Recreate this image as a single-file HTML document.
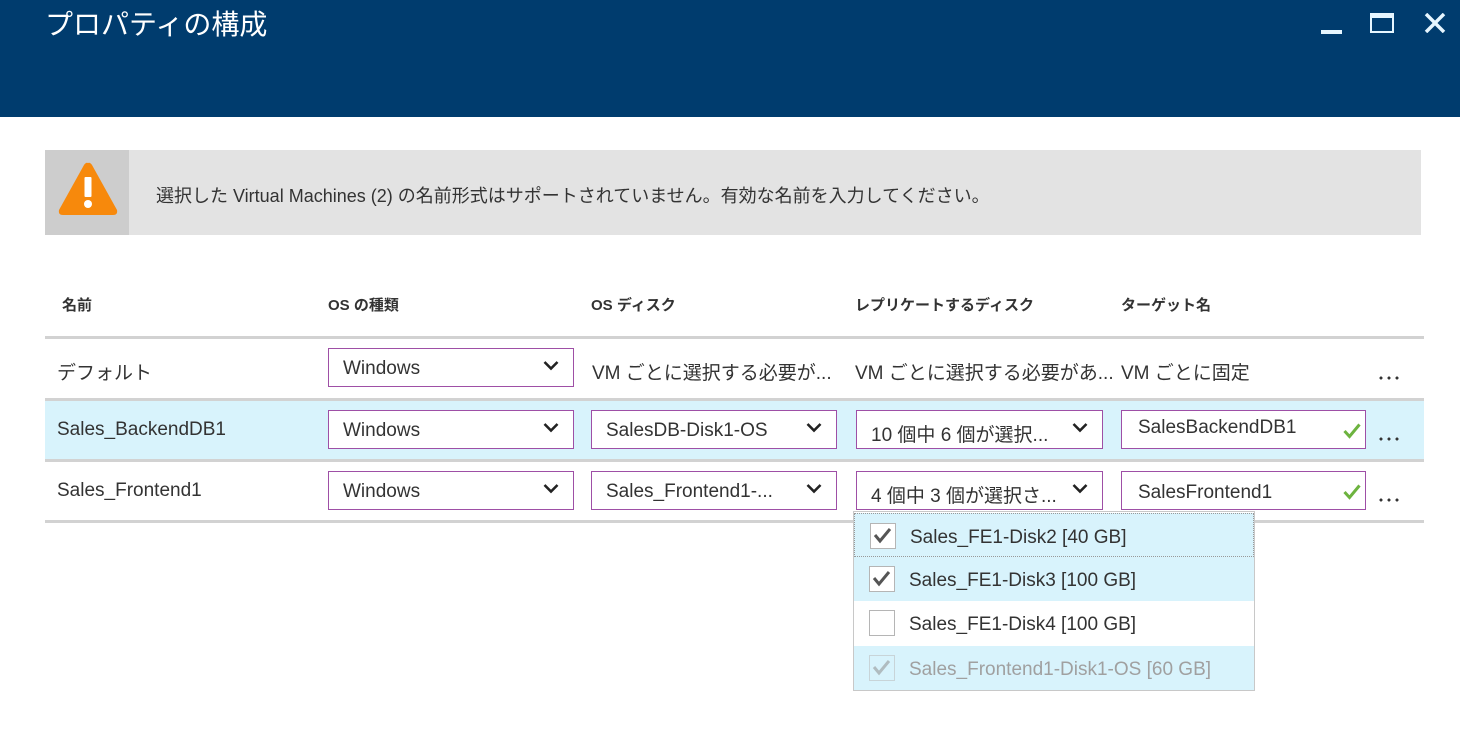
<!DOCTYPE html>
<html><head><meta charset="utf-8"><style>
*{margin:0;padding:0;box-sizing:border-box}
body{width:1460px;height:745px;background:#fff;position:relative;overflow:hidden;font-family:"Liberation Sans","Noto Sans CJK JP",sans-serif;color:#333}
.a{position:absolute;white-space:nowrap}
.hdr{left:0;top:0;width:1460px;height:117px;background:#003c6e}
.title{left:45px;top:3px;font-size:28px;color:#fff}
.warn{left:45px;top:150px;width:1376px;height:85px;background:#e3e3e3}
.wi{left:45px;top:150px;width:84px;height:85px;background:#cdcdcd}
.wt{left:156px;top:182px;font-size:18px;color:#333}
.th{top:294px;font-size:15px;font-weight:bold;color:#333}
.line{left:45px;width:1379px;height:3px;background:#d2d2d2}
.cell{font-size:19px;color:#333}
.sel{height:39px;border:1.5px solid #9e4fa6;background:#fff;font-size:19px;padding:9px 0 0 14px;overflow:hidden}
.chev{position:absolute;right:14px;top:10px}
.dots{width:24px;height:4px;background:radial-gradient(circle,#333 1.4px,transparent 1.6px) 0 0/8px 4px repeat-x}
.dd{left:853px;top:511px;width:402px;height:180px;border:1px solid #c8c8c8;background:#fff}
.opt{position:absolute;left:0;width:400px;height:44px;font-size:19px;padding:13px 0 0 55px}
.box{position:absolute;left:15px;top:9px;width:26px;height:26px;border:1.5px solid #b5b5b5;background:#fff}
</style></head><body>
<div class="a hdr"></div>
<div class="a title">プロパティの構成</div>
<div class="a" style="left:1321px;top:30px;width:21px;height:4px;background:#e6f6ff"></div>
<div class="a" style="left:1370px;top:13px;width:24px;height:20px;border:2px solid #e6f6ff;border-top-width:5px"></div>
<svg class="a" style="left:1424px;top:13px" width="22" height="20" viewBox="0 0 22 20"><path d="M2 1L20 19M20 1L2 19" stroke="#e6f6ff" stroke-width="3.5"/></svg>

<div class="a warn"></div>
<div class="a wi"></div>
<svg class="a" style="left:56px;top:160px" width="64" height="58" viewBox="0 0 64 58"><path d="M32 3 Q34 2 36 5 L61 50 Q62 55 57 55 L7 55 Q2 55 3 50 L28 5 Q30 2 32 3Z" fill="#f7890c"/><rect x="28.5" y="17" width="7" height="20" rx="1" fill="#fff"/><circle cx="32" cy="44" r="4" fill="#fff"/></svg>
<div class="a wt">選択した Virtual Machines (2) の名前形式はサポートされていません。有効な名前を入力してください。</div>

<div class="a th" style="left:62px">名前</div>
<div class="a th" style="left:328px">OS の種類</div>
<div class="a th" style="left:591px">OS ディスク</div>
<div class="a th" style="left:855px">レプリケートするディスク</div>
<div class="a th" style="left:1121px">ターゲット名</div>

<div class="a line" style="top:336px"></div>
<div class="a" style="left:45px;top:400px;width:1379px;height:59px;background:#d8f3fc"></div>
<div class="a line" style="top:398px"></div>
<div class="a line" style="top:459px"></div>
<div class="a line" style="top:520px"></div>

<!-- row1 -->
<div class="a cell" style="left:57px;top:358px">デフォルト</div>
<div class="a sel" style="left:328px;top:348px;width:246px">Windows<svg class="chev" width="16" height="12" viewBox="0 0 16 12"><path d="M1.5 3L8 9.5L14.5 3" fill="none" stroke="#222" stroke-width="2.6"/></svg></div>
<div class="a cell" style="left:592px;top:358px">VM ごとに選択する必要が...</div>
<div class="a cell" style="left:855px;top:358px">VM ごとに選択する必要があ...</div>
<div class="a cell" style="left:1121px;top:358px">VM ごとに固定</div>
<div class="a dots" style="left:1377px;top:376px"></div>

<!-- row2 -->
<div class="a cell" style="left:57px;top:419px">Sales_BackendDB1</div>
<div class="a sel" style="left:328px;top:410px;width:246px">Windows<svg class="chev" width="16" height="12" viewBox="0 0 16 12"><path d="M1.5 3L8 9.5L14.5 3" fill="none" stroke="#222" stroke-width="2.6"/></svg></div>
<div class="a sel" style="left:591px;top:410px;width:246px">SalesDB-Disk1-OS<svg class="chev" width="16" height="12" viewBox="0 0 16 12"><path d="M1.5 3L8 9.5L14.5 3" fill="none" stroke="#222" stroke-width="2.6"/></svg></div>
<div class="a sel" style="left:856px;top:410px;width:247px">10 個中 6 個が選択...<svg class="chev" width="16" height="12" viewBox="0 0 16 12"><path d="M1.5 3L8 9.5L14.5 3" fill="none" stroke="#222" stroke-width="2.6"/></svg></div>
<div class="a sel" style="left:1121px;top:410px;width:245px;padding-top:6px;padding-left:16px">SalesBackendDB1<svg class="chev" style="right:4px;top:12px" width="18" height="16" viewBox="0 0 18 16"><path d="M1.5 8L6.5 13.5L16.5 1.5" fill="none" stroke="#6db33f" stroke-width="3"/></svg></div>
<div class="a dots" style="left:1377px;top:437px"></div>

<!-- row3 -->
<div class="a cell" style="left:57px;top:480px">Sales_Frontend1</div>
<div class="a sel" style="left:328px;top:471px;width:246px">Windows<svg class="chev" width="16" height="12" viewBox="0 0 16 12"><path d="M1.5 3L8 9.5L14.5 3" fill="none" stroke="#222" stroke-width="2.6"/></svg></div>
<div class="a sel" style="left:591px;top:471px;width:246px">Sales_Frontend1-...<svg class="chev" width="16" height="12" viewBox="0 0 16 12"><path d="M1.5 3L8 9.5L14.5 3" fill="none" stroke="#222" stroke-width="2.6"/></svg></div>
<div class="a sel" style="left:856px;top:471px;width:247px">4 個中 3 個が選択さ...<svg class="chev" width="16" height="12" viewBox="0 0 16 12"><path d="M1.5 3L8 9.5L14.5 3" fill="none" stroke="#222" stroke-width="2.6"/></svg></div>
<div class="a sel" style="left:1121px;top:471px;width:245px;padding-top:10px;padding-left:16px">SalesFrontend1<svg class="chev" style="right:4px;top:12px" width="18" height="16" viewBox="0 0 18 16"><path d="M1.5 8L6.5 13.5L16.5 1.5" fill="none" stroke="#6db33f" stroke-width="3"/></svg></div>
<div class="a dots" style="left:1377px;top:498px"></div>

<!-- dropdown -->
<div class="a dd">
 <div class="opt" style="top:1px;background:#d8f3fc;border:1px dotted #999">
  <div class="box"><svg width="23" height="23" viewBox="0 0 23 23"><path d="M4 11L9 17L19 5" fill="none" stroke="#555" stroke-width="3"/></svg></div>Sales_FE1-Disk2 [40 GB]</div>
 <div class="opt" style="top:45px;background:#d8f3fc">
  <div class="box"><svg width="23" height="23" viewBox="0 0 23 23"><path d="M4 11L9 17L19 5" fill="none" stroke="#555" stroke-width="3"/></svg></div>Sales_FE1-Disk3 [100 GB]</div>
 <div class="opt" style="top:89px">
  <div class="box"></div>Sales_FE1-Disk4 [100 GB]</div>
 <div class="opt" style="top:134px;background:#d8f3fc;color:#a0a0a0">
  <div class="box" style="background:#d8f3fc;border-color:#c8d4d8"><svg width="23" height="23" viewBox="0 0 23 23"><path d="M4 11L9 17L19 5" fill="none" stroke="#b0bcc0" stroke-width="3"/></svg></div>Sales_Frontend1-Disk1-OS [60 GB]</div>
</div>
</body></html>
